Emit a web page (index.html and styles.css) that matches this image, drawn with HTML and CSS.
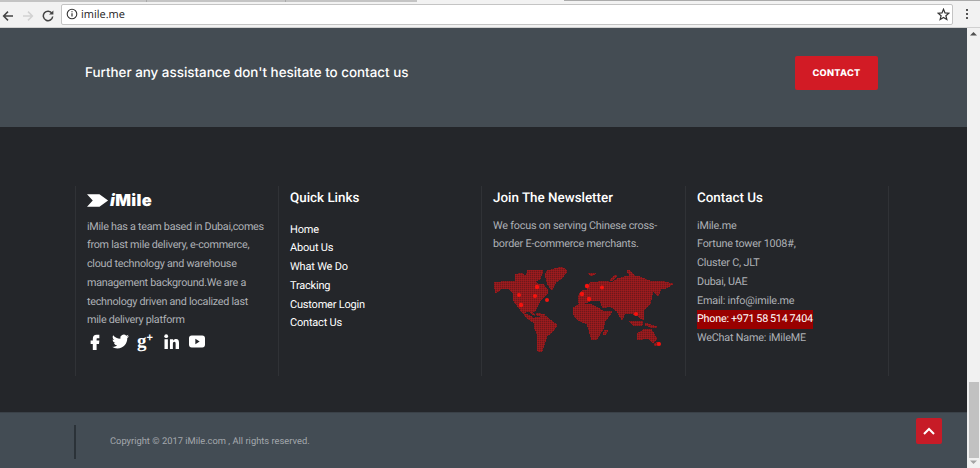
FILE: index.html
```html
<!DOCTYPE html>
<html lang="en">
<head>
<meta charset="utf-8">
<title>iMile</title>
<link rel="stylesheet" href="styles.css">
</head>
<body>
<div class="window">
  <div class="tabstrip">
    <div class="tabs-left"><span class="tabseg"></span><span class="tabseg"></span><span class="tabseg tabseg-end"></span></div>
    <div class="tabs-right"></div>
  </div>
  <div class="toolbar">
    <div class="nav">
      <svg class="nav-icon" viewBox="0 0 12 12"><path d="M11 6H2M6 1.6 1.6 6 6 10.4" fill="none" stroke="#444" stroke-width="1.5"/></svg>
      <svg class="nav-icon" viewBox="0 0 12 12"><path d="M1 6h9M6 1.6 10.4 6 6 10.4" fill="none" stroke="#d2d2d2" stroke-width="1.5"/></svg>
      <svg class="nav-icon" viewBox="0 0 12 12"><path d="M10 3.4A4.7 4.7 0 1 0 10.7 6.5" fill="none" stroke="#444" stroke-width="1.5"/><path d="M7 4.6h4.4V.4z" fill="#444"/></svg>
    </div>
    <div class="omnibox">
      <svg class="info-icon" viewBox="0 0 12 12"><circle cx="6" cy="6" r="4.8" fill="none" stroke="#333" stroke-width="1.1"/><path d="M6 5.2v3.4M6 3.2v1.1" stroke="#333" stroke-width="1.2"/></svg>
      <span class="url">imile.me</span>
      <svg class="star-icon" viewBox="0 0 12 12"><path d="M6 1.1 7.4 4.5 11 4.8 8.2 7.1 9.1 10.7 6 8.8 2.9 10.7 3.8 7.1 1 4.8 4.6 4.5z" fill="none" stroke="#333" stroke-width="1.1"/></svg>
    </div>
    <div class="menu-dots"><i></i><i></i><i></i></div>
  </div>
  <div class="viewport">
    <main class="page">
      <section class="cta">
        <h2 class="cta-title">Further any assistance don't hesitate to contact us</h2>
        <a class="cta-btn" href="#">CONTACT</a>
      </section>
      <footer class="footer">
        <div class="footer-grid">
          <div class="col col-about">
            <div class="logo">
              <svg class="logo-mark" viewBox="0 0 24 13"><path d="M0 0h13l9 6.5-9 6.5H0l6-6.500z" fill="#fff"/></svg>
              <span class="logo-text"><i>i</i>Mile</span>
            </div>
            <p class="text text-about">iMile has a team based in Dubai,comes<br>from last mile delivery, e-commerce,<br>cloud technology and warehouse<br>management background.We are a<br>technology driven and localized last<br>mile delivery platform</p>
            <div class="social">
              <svg class="soc soc-f" viewBox="6 2 12 22"><path d="M14.500 8H18V3h-3.800C10.800 3 9 5.200 9 8.400V11H6v4.600h3V24h5.200v-8.400H17.500l.5-4.600h-3.800V9c0-.7.200-1 .8-1z" fill="#fff"/></svg>
              <svg class="soc soc-t" viewBox="0 0 24 24"><path d="M23.953 4.570a10 10 0 0 1-2.825.775 4.958 4.958 0 0 0 2.163-2.723c-.951.555-2.005.959-3.127 1.184a4.920 4.920 0 0 0-8.384 4.482C7.690 8.095 4.067 6.130 1.640 3.162a4.822 4.822 0 0 0-.666 2.475c0 1.710.870 3.213 2.188 4.096a4.904 4.904 0 0 1-2.228-.616v.060a4.923 4.923 0 0 0 3.946 4.827 4.996 4.996 0 0 1-2.212.085 4.936 4.936 0 0 0 4.604 3.417 9.867 9.867 0 0 1-6.102 2.105c-.390 0-.779-.023-1.170-.067a13.995 13.995 0 0 0 7.557 2.209c9.053 0 13.998-7.496 13.998-13.985 0-.210 0-.420-.015-.630A9.935 9.935 0 0 0 24 4.590z" fill="#fff"/></svg>
              <span class="soc-g">g<sup>+</sup></span>
              <svg class="soc soc-in" viewBox="0 0 24 24"><circle cx="3.500" cy="3.500" r="3" fill="#fff"/><path d="M.8 8.500h5.400V24H.8zM9.500 8.500h5.100v2.200c.9-1.500 2.600-2.600 4.800-2.600 3.500 0 4.600 2.500 4.600 6V24h-5.400v-8.500c0-1.800-.5-3-2-3-1.700 0-2.400 1.300-2.400 3V24H9.500z" fill="#fff"/></svg>
              <svg class="soc soc-y" viewBox="0 0 24 18"><path fill-rule="evenodd" d="M4 0h16c2.500 0 4 1.500 4 4v10c0 2.500-1.500 4-4 4H4c-2.500 0-4-1.500-4-4V4c0-2.500 1.500-4 4-4zM9.500 5v8l6.500-4z" fill="#fff"/></svg>
            </div>
          </div>
          <div class="col">
            <h3 class="col-title">Quick Links</h3>
            <ul class="links">
              <li><a href="#">Home</a></li>
              <li><a href="#">About Us</a></li>
              <li><a href="#">What We Do</a></li>
              <li><a href="#">Tracking</a></li>
              <li><a href="#">Customer Login</a></li>
              <li><a href="#">Contact Us</a></li>
            </ul>
          </div>
          <div class="col">
            <h3 class="col-title">Join The Newsletter</h3>
            <p class="text text-news">We focus on serving Chinese cross-<br>border E-commerce merchants.</p>
            <svg class="map" viewBox="0 0 181 90" aria-label="World map">
              <defs>
                <pattern id="dots" width="2" height="2" patternUnits="userSpaceOnUse">
                  <rect width="2" height="2" fill="#8f1a1d"/>
                  <rect width="1" height="1" fill="#a01b1e"/>
                  <rect x="1" y="1" width="1" height="1" fill="#6c191b"/>
                </pattern>
              </defs>
              <g fill="url(#dots)" stroke="url(#dots)" stroke-width="1" stroke-linejoin="round" shape-rendering="crispEdges">
                <!-- Americas and Greenland -->
                <polygon points="1,19 15,17 22,18 22,11 28,9 33,12 35,6 50,7 47,15 42,17 45,21 50,20 55,27 54,30 47,37 42,47 39,47 42,52 36,47 30,49 26,44 21,37 20,29 15,24 9,24 3,29 2,25"/>
                <polygon points="54,7 69,3 74,7 69,14 63,18 59,26 55,21 52,11"/>
                <polygon points="30,49 37,52 42,55 46,53 44,58 40,58 34,54"/>
                <polygon points="43,49 52,51 51,53 44,51"/>
                <polygon points="42,54 52,52 64,61 60,67 54,72 49,87 45,87 44,70 41,62"/>
                <!-- Africa -->
                <polygon points="80,44 87,40 97,40 105,44 110,47 119,48 112,57 110,65 104,75 99,76 94,60 85,56 80,50"/>
                <polygon points="112,66 115,67 112,71 110,70"/>
                <!-- Eurasia -->
                <polygon points="85,32 89,27 94,26 97,19 105,18 112,17 119,19 124,15 135,12 144,12 157,17 172,18 180,20 173,24 168,25 165,32 160,27 157,40 150,47 150,56 145,52 140,50 132,49 129,56 124,47 117,42 110,44 107,37 100,36 92,39 86,39"/>
                <polygon points="95,9 103,9 99,12"/>
                <polygon points="117,16 122,11 124,12 119,17"/>
                <polygon points="134,7 136,6 142,12 137,12"/>
                <!-- Oceania -->
                <polygon points="136,57 150,57 149,61 140,61"/>
                <polygon points="152,59 164,63 160,64 152,61"/>
                <polygon points="144,70 152,65 158,65 164,75 160,79 155,74 145,76"/>
                <polygon points="161,80 166,78 166,81 162,82"/>
              </g>
              <g fill="#f5130f">
                <circle cx="44" cy="23" r="2.200"/><circle cx="26" cy="31" r="2"/><circle cx="42" cy="32" r="2.100"/><circle cx="54" cy="36" r="2"/><circle cx="28" cy="41" r="2.200"/>
                <circle cx="94" cy="22" r="2.200"/><circle cx="109" cy="23.500" r="2"/><circle cx="89" cy="30" r="2.200"/><circle cx="96" cy="35" r="2.200"/><circle cx="143" cy="50" r="2.100"/><circle cx="166" cy="80" r="2"/>
              </g>
            </svg>
          </div>
          <div class="col">
            <h3 class="col-title">Contact Us</h3>
            <div class="contact">
              <div>iMile.me</div>
              <div>Fortune tower 1008#,</div>
              <div>Cluster C, JLT</div>
              <div>Dubai, UAE</div>
              <div>Email: info@imile.me</div>
              <div><span class="phone">Phone: +971 58 514 7404</span></div>
              <div>WeChat Name: iMileME</div>
            </div>
          </div>
        </div>
      </footer>
      <div class="bottom">
        <div class="divider"></div>
        <p class="copyright">Copyright © 2017 iMile.com , All rights reserved.</p>
        <a class="to-top" href="#" aria-label="Back to top"><svg class="to-top-icon" viewBox="0 0 12 8"><path d="M1 7 6 2l5 5" fill="none" stroke="#fff" stroke-width="2"/></svg></a>
      </div>
    </main>
    <div class="scrollbar">
      <svg class="sb-arrow" viewBox="0 0 12 12"><path d="M2.500 7.500 6 4l3.500 3.500z" fill="#505050"/></svg>
      <div class="sb-track"><div class="sb-thumb"></div></div>
      <svg class="sb-arrow" viewBox="0 0 12 12"><path d="M2.500 4.500 6 8l3.500-3.500z" fill="#a3a3a3"/></svg>
    </div>
  </div>
</div>
</body>
</html>
```

FILE: styles.css
```css
* { box-sizing: border-box; }
html, body { margin: 0; padding: 0; }
body { width: 980px; height: 468px; overflow: hidden; background: #f2f2f2; font-family: "Roboto", "Liberation Sans", sans-serif; text-rendering: geometricPrecision; }
h2, h3, p, ul { margin: 0; padding: 0; }
a { color: inherit; text-decoration: none; }
.window { display: flex; flex-direction: column; height: 468px; }

.tabstrip { display: flex; justify-content: space-between; height: 4px; background: #f2f2f2; flex: none; }
.tabs-left { display: flex; width: 417px; height: 2px; background: #c4c4c4; }
.tabseg { width: 147px; border-right: 1px solid #a8a8a8; }
.tabseg + .tabseg { width: 139px; }
.tabseg-end { flex: 1; border-right: 0; }
.tabs-right { width: 416px; height: 1px; background: #ababab; }

.toolbar { display: flex; align-items: center; height: 24px; flex: none; background: #f2f2f2; border-bottom: 1px solid #d0d0d0; }
.nav { display: flex; gap: 8px; padding-left: 2px; width: 61px; flex: none; }
.nav-icon { width: 12px; height: 12px; }
.omnibox { display: flex; align-items: center; width: 892px; height: 21px; margin-top: -3px; background: #fff; border: 1px solid #c4c4c4; border-radius: 2px; padding: 0 2px 0 4px; }
.info-icon { width: 12px; height: 12px; }
.url { margin-left: 3px; font: 11px "Open Sans", "Liberation Sans", sans-serif; color: #222; flex: 1; }
.star-icon { width: 13px; height: 13px; }
.menu-dots { display: flex; flex-direction: column; gap: 2px; margin: -3px 0 0 13px; }
.menu-dots i { display: block; width: 2px; height: 2px; background: #555; }

.viewport { display: flex; height: 440px; flex: none; }
.page { width: 967px; flex: none; display: flex; flex-direction: column; }

.cta { height: 99px; flex: none; background: #444c53; display: flex; align-items: center; justify-content: space-between; padding: 0 89px 9px 85px; }
.cta-title { font-family: "Inter", sans-serif; font-size: 13.400px; font-weight: 500; color: #fff; }
.cta-btn { display: flex; align-items: center; justify-content: center; width: 83px; height: 34px; background: #d21b25; border-radius: 2px; color: #fff; font-family: "Inter", sans-serif; font-size: 9.200px; font-weight: 800; letter-spacing: 0.3px; }

.footer { height: 285px; flex: none; background: #24262a; padding: 59px 0 0 75px; }
.footer-grid { display: grid; grid-template-columns: 203px 203px 204px 203px; height: 190px; width: 814px; border-right: 1px solid #303236; }
.col { border-left: 1px solid #303236; padding-left: 11px; }
.col-about { padding-top: 6px; }
.col-title { font-size: 13.400px; line-height: 22px; font-weight: 500; color: #fff; padding-top: 2px; }
.logo { display: flex; align-items: center; height: 16px; margin: 0 0 9.600px 0; }
.logo-mark { width: 23px; height: 13px; }
.logo-text { font: 900 16.500px "Inter", sans-serif; color: #fff; letter-spacing: 0.3px; }
.logo-text i { font-style: italic; }
.text { font-size: 10.800px; letter-spacing: -0.200px; line-height: 18.750px; color: #aeb1b6; font-weight: 400; }
.text-about { white-space: nowrap; letter-spacing: -0.280px; }
.text-news { margin-top: 6.600px; }
.social { display: flex; align-items: center; margin-top: 3px; height: 17px; }
.soc { display: block; flex: none; }
.soc-f { width: 10px; height: 16px; margin-left: 3px; }
.soc-t { width: 17px; height: 17px; margin-left: 12px; }
.soc-g { font: 700 19px/17px "Liberation Serif", serif; color: #fff; margin-left: 8px; width: 18px; flex: none; }
.soc-g sup { font: 700 11px/1 "Liberation Sans", sans-serif; vertical-align: 6px; }
.soc-in { width: 15px; height: 15px; margin-left: 9px; }
.soc-y { width: 16px; height: 13px; margin-left: 10px; }
.links { list-style: none; margin-top: 10.600px; font-size: 11px; letter-spacing: -0.200px; line-height: 18.750px; color: #fff; }
.map { display: block; width: 181px; height: 90px; margin-top: 10.400px; }
.contact { margin-top: 6.600px; font-size: 10.800px; letter-spacing: -0.200px; line-height: 18.750px; color: #aeb1b6; font-weight: 400; }
.phone { display: inline-block; background: #990000; color: #fff; font-weight: 400; min-width: 114px; white-space: nowrap; word-spacing: -0.600px; }

.bottom { height: 56px; flex: none; background: #434c54; display: flex; align-items: center; padding-left: 74px; border-top: 1px solid #3a4148; position: relative; }
.divider { width: 2px; height: 34px; background: #2b3238; flex: none; margin-top: 3px; }
.copyright { margin: 2px 0 0 34px; font-size: 9.350px; font-weight: 400; color: #a3a8ad; }
.to-top { position: absolute; left: 916px; top: 5px; width: 26px; height: 26px; background: #c71b27; border-radius: 2px; display: flex; align-items: center; justify-content: center; }
.to-top-icon { width: 12px; height: 8px; }

.scrollbar { flex: 1; display: flex; flex-direction: column; background: #f1f1f1; }
.sb-arrow { width: 13px; height: 12px; flex: none; }
.sb-track { flex: 1; padding: 0 1px 0 2px; display: flex; flex-direction: column; justify-content: flex-end; }
.sb-thumb { height: 76px; background: #c1c1c1; margin-bottom: -2px; }
```
